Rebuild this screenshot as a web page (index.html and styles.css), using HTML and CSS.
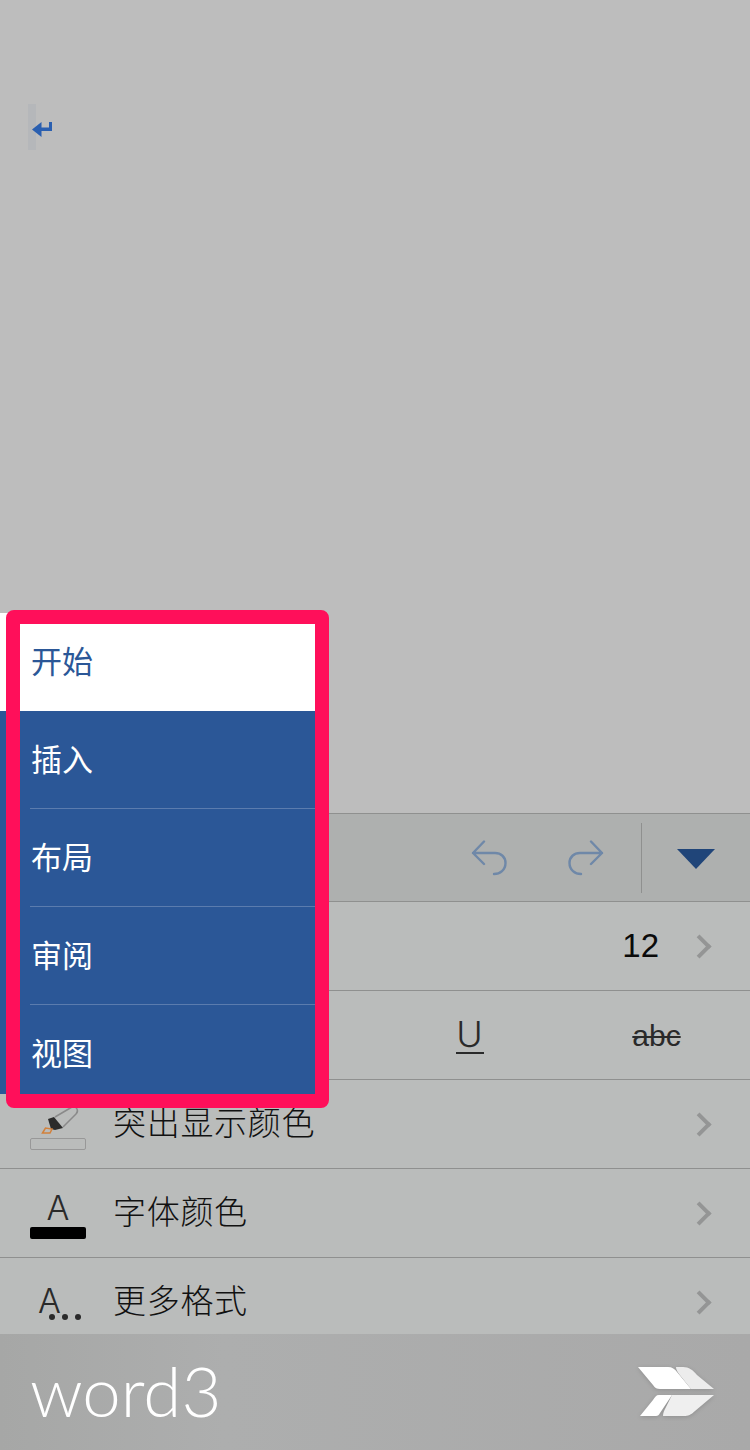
FILE: index.html
```html
<!DOCTYPE html>
<html lang="zh-CN">
<head>
  <meta charset="UTF-8">
  <title>word3</title>
  <link rel="stylesheet" href="styles.css">
</head>
<body>

<div class="page">
  <div class="doc">
    <div class="cursor"></div>
    <svg class="para-mark" width="22" height="18" viewBox="0 0 22 18">
      <path d="M0 9.500L9.500 2V7.500H17V2H20V11H9.500V17Z" fill="#2a5fb0"/>
    </svg>
  </div>

  <div class="toolbar">
    <svg class="tool-icon" width="36" height="36" viewBox="0 0 36 36" fill="none" stroke="#6f88a8" stroke-width="2.4" stroke-linecap="round" stroke-linejoin="round">
      <path d="M13 1.5L2 13L13 24M2 13H24C30 13 34.500 17 34.500 23C34.500 30 29 34 23 34"/>
    </svg>
    <svg class="tool-icon" width="36" height="36" viewBox="0 0 36 36" fill="none" stroke="#6f88a8" stroke-width="2.4" stroke-linecap="round" stroke-linejoin="round">
      <path d="M23 1.500L34 13L23 24M34 13H12C6 13 1.500 17 1.500 23C1.500 30 7 34 13 34"/>
    </svg>
    <div class="tool-sep"></div>
    <div class="tool-caret"></div>
  </div>

  <div class="row row-size">
    <span class="size-value">12</span>
    <span class="chevron"></span>
  </div>

  <div class="row row-style">
    <div class="style-cell"><span class="underline">U</span></div>
    <div class="style-cell"><span class="strike">abc</span></div>
  </div>

  <div class="row">
    <div class="row-icon">
      <svg class="pen" width="56" height="34" viewBox="0 0 56 34">
        <path d="M25 13L42 3C44 2 46 3 47 5C48 7 47 9 46 10L33 23" fill="none" stroke="#8a8a8a" stroke-width="1.500"/>
        <path d="M18 15L24 13L33 24L25 26L21 25Z" fill="#2b2b2b"/>
        <path d="M12.500 29L15.500 24L22 25L20 29Z" fill="none" stroke="#d2813c" stroke-width="1.500"/>
      </svg>
      <div class="swatch-empty"></div>
    </div>
    <span class="row-label">突出显示颜色</span>
    <span class="chevron"></span>
  </div>

  <div class="row">
    <div class="row-icon">
      <span class="letter">A</span>
      <div class="swatch-black"></div>
    </div>
    <span class="row-label">字体颜色</span>
    <span class="chevron"></span>
  </div>

  <div class="row">
    <div class="row-icon more-icon">
      <span class="letter">A</span>
      <span class="dots"><i></i><i></i><i></i></span>
    </div>
    <span class="row-label">更多格式</span>
    <span class="chevron"></span>
  </div>

  <div class="footer">
    <span class="brand">word3</span>
    <svg class="logo" width="78" height="50" viewBox="0 0 78 50">
      <path d="M0 0H30C34 0 37 2 39 5L53 22H22C19 22 17 21 15 18Z" fill="#fff"/>
      <path d="M38 0H45C51 0 55 3 59 8L76 22H53L41 7C39 4 38 2 38 0Z" fill="#ececec"/>
      <path d="M21 28H34L22 46C21 48 20 49 18 49H2L15 33C17 30 18 28 21 28Z" fill="#fff"/>
      <path d="M34 28H76L57 44C53 48 50 49 46 49H25C25 46 26 44 27 42Z" fill="#efefef"/>
    </svg>
  </div>

  <ul class="tabs">
    <li class="tab active">开始</li>
    <li class="tab">插入</li>
    <li class="tab">布局</li>
    <li class="tab">审阅</li>
    <li class="tab">视图</li>
  </ul>
  <div class="highlight"></div>
</div>

</body>
</html>
```

FILE: styles.css
```css
* {
  box-sizing: border-box;
}
html, body {
  margin: 0;
  padding: 0;
}
.page {
  position: relative;
  width: 750px;
  height: 1450px;
  overflow: hidden;
  display: flex;
  flex-direction: column;
  background: #bababa;
  font-family: "Liberation Sans", "Noto Sans CJK SC", sans-serif;
}

/* document area */
.doc {
  height: 813px;
  flex: none;
  background: #bdbdbd;
  padding: 104px 0 0 28px;
  display: flex;
  align-items: flex-start;
}
.cursor {
  width: 8px;
  height: 46px;
  background: #b5b7ba;
}
.para-mark {
  margin: 16px 0 0 -4px;
}

/* toolbar */
.toolbar {
  height: 89px;
  flex: none;
  display: flex;
  align-items: center;
  background: #aeb0af;
  border-top: 1px solid #8f908f;
  border-bottom: 1px solid #8f908f;
}
.tool-icon {
  flex: none;
}
.tool-icon:first-child {
  margin-left: 471px;
}
.tool-icon + .tool-icon {
  margin-left: 61px;
}
.tool-sep {
  width: 1px;
  height: 70px;
  margin-left: 37px;
  background: #8f908f;
}
.tool-caret {
  width: 0;
  height: 0;
  margin: 2px 0 0 35px;
  border-left: 19px solid transparent;
  border-right: 19px solid transparent;
  border-top: 20px solid #204579;
}

/* list rows */
.row {
  height: 89px;
  flex: none;
  display: flex;
  align-items: center;
  padding: 0 39px 0 30px;
  background: #babcbb;
  border-bottom: 1px solid #8f908f;
  color: #111;
}
.row-size {
  justify-content: flex-end;
}
.size-value {
  font-size: 33px;
  color: #0a0a0a;
  margin-right: 32px;
}
.chevron {
  flex: none;
  width: 17px;
  height: 17px;
  border-top: 4px solid #949595;
  border-right: 4px solid #949595;
  transform: rotate(45deg);
  margin-right: 3px;
}
.row-style {
  justify-content: flex-end;
  padding: 0;
}
.style-cell {
  width: 187px;
  text-align: center;
  font-size: 32px;
  color: #2a2a2a;
}
.underline {
  display: inline-block;
  width: 28px;
  font-family: Inter, sans-serif;
  font-weight: 300;
  font-size: 36px;
  line-height: 36px;
  border-bottom: 2px solid #2a2a2a;
}
.strike {
  font-size: 30px;
  text-decoration: line-through;
  text-decoration-thickness: 2px;
}
.row-icon {
  flex: none;
  position: relative;
  width: 56px;
  height: 70px;
  margin-right: 28px;
  display: flex;
  flex-direction: column;
  align-items: center;
  justify-content: flex-end;
}
.pen {
  display: block;
  overflow: visible;
}
.swatch-empty {
  width: 56px;
  height: 12px;
  margin-bottom: 9px;
  border: 1px solid #989898;
  border-radius: 2px;
}
.swatch-black {
  width: 56px;
  height: 12px;
  margin-bottom: 9px;
  background: #000;
  border-radius: 2px;
}
.letter {
  font-family: Inter, sans-serif;
  font-weight: 300;
  font-size: 34px;
  line-height: 38px;
  color: #2a2a2a;
}
.more-icon {
  align-items: flex-start;
  padding: 0 0 0 8px;
  justify-content: flex-start;
}
.dots {
  position: absolute;
  left: 19px;
  top: 47px;
  display: flex;
  gap: 7px;
}
.dots i {
  width: 6px;
  height: 6px;
  border-radius: 50%;
  background: #2a2a2a;
}
.more-icon .letter {
  margin-top: 15px;
}
.row-label {
  flex: 1;
  padding-bottom: 7px;
  margin-left: -1px;
  font-family: "Noto Sans CJK SC", sans-serif;
  font-weight: 300;
  font-size: 33px;
  letter-spacing: 0.7px;
}

/* brand footer */
.footer {
  position: absolute;
  left: 0;
  right: 0;
  bottom: 0;
  height: 116px;
  display: flex;
  align-items: center;
  justify-content: space-between;
  padding: 0 34px 0 30px;
  background: linear-gradient(to right, #a6a7a6, #adaeae 30%, #a9a9a9);
}
.brand {
  margin-bottom: 4px;
  font-family: Lato, sans-serif;
  font-weight: 300;
  font-size: 69px;
  line-height: 1;
  color: #fff;
}
.logo {
  filter: drop-shadow(0 1px 2px rgba(0,0,0,0.15));
}

/* tab menu lying over the panel */
.tabs {
  position: absolute;
  left: 0;
  top: 613px;
  width: 315px;
  height: 481px;
  margin: 0;
  padding: 0;
  overflow: hidden;
  list-style: none;
  background: #2b5797;
}
.tab {
  position: relative;
  height: 98px;
  padding-left: 31px;
  font-family: "Noto Sans CJK SC", sans-serif;
  font-size: 31px;
  line-height: 94px;
  color: #fff;
}
.tab:nth-child(n+3)::before {
  content: "";
  position: absolute;
  left: 30px;
  right: 0;
  top: -1px;
  height: 1px;
  background: #5b7cae;
}
.tab.active {
  background: #fff;
  color: #2b5797;
}
.highlight {
  position: absolute;
  left: 6px;
  top: 610px;
  width: 323px;
  height: 498px;
  border: 14px solid #ff0f5a;
  border-radius: 8px;
}
```
